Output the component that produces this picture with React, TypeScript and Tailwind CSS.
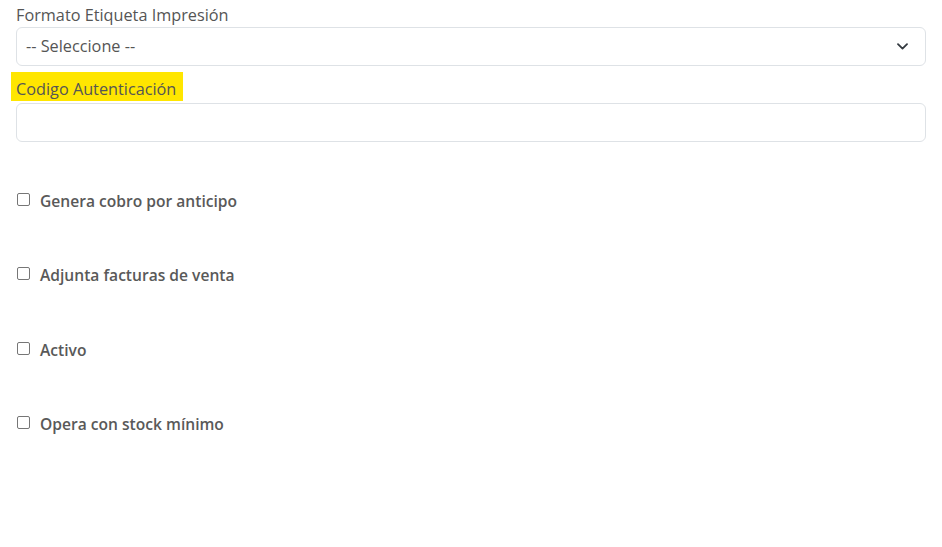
import React from "react";

function Check({ label }: { label: string }) {
  return (
    <label className="flex h-6 items-start">
      <span className="ml-[1px] mt-[4px] h-[13px] w-[13px] shrink-0 rounded-[2px] border border-[#767676] bg-white" />
      <span className="ml-[10px] text-[15.6px] font-semibold leading-6 text-[#595959]">{label}</span>
    </label>
  );
}

export default function App() {
  return (
    <div
      className="min-h-[547px] w-full bg-white px-4 pt-[3px]"
      style={{ fontFamily: '"Open Sans", sans-serif' }}
    >
      <div className="text-[16.25px] leading-6 text-[#555555]">Formato Etiqueta Impresión</div>
      <div className="flex h-[39px] items-center justify-between rounded-[6px] border border-[#dee2e6] bg-white pl-[9px] pr-[17px]">
        <span className="text-[16.25px] text-[#555555]">-- Seleccione --</span>
        <svg width="11" height="7" viewBox="0 0 11 7" fill="none" stroke="#343a40" strokeWidth="1.8" strokeLinecap="round" strokeLinejoin="round">
          <path d="M1 1.2 5.5 5.6 10 1.2" />
        </svg>
      </div>
      <div className="mt-[6px] flex">
        <span className="-ml-[5px] bg-[#ffe600] pl-[5px] pr-[7px] pt-[5px] text-[16.25px] leading-6 text-[#555555]">
          Codigo Autenticación
        </span>
      </div>
      <div className="mt-[2px] h-[39px] rounded-[6px] border border-[#dee2e6] bg-white" />
      <div className="mt-[47px] flex flex-col gap-[50.33px]">
        <Check label="Genera cobro por anticipo" />
        <Check label="Adjunta facturas de venta" />
        <Check label="Activo" />
        <Check label="Opera con stock mínimo" />
      </div>
    </div>
  );
}
